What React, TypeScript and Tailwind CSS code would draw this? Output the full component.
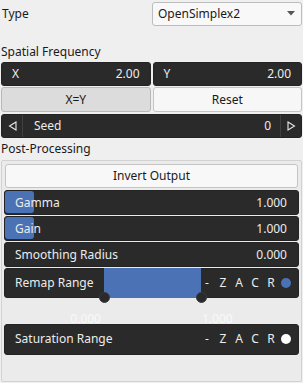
import React from "react";

const Dark = ({ children, className = "" }: { children?: React.ReactNode; className?: string }) => (
  <div className={`bg-[#2a2a2a] rounded-[3px] border border-[#232323] text-[#ececec] ${className}`}>{children}</div>
);

const Letters = ({ dot }: { dot: string }) => (
  <div className="absolute right-[7px] top-[5px] flex items-center text-[#ececec]">
    <span className="w-[16px] text-center">-</span>
    <span className="w-[16px] text-center">Z</span>
    <span className="w-[16px] text-center">A</span>
    <span className="w-[16px] text-center">C</span>
    <span className="w-[16px] text-center">R</span>
    <span className={`ml-[2px] w-[10px] h-[10px] rounded-full ${dot}`} />
  </div>
);

export default function App() {
  return (
    <div
      className="w-[303px] h-[383px] bg-[#efefef] text-[12px] text-[#1a1a1a] flex flex-col overflow-hidden"
      style={{ fontFamily: '"Noto Sans", "Open Sans", sans-serif' }}
    >
      {/* Type row */}
      <div className="h-[26px] flex items-center justify-between pt-[1px]">
        <span className="pl-[2px]">Type</span>
        <div className="w-[150px] h-[24px] mr-[1px] bg-[#f8f8f8] border border-[#bdbdbd] rounded-[3px] flex items-center justify-between pl-[5px] pr-[6px]">
          <span>OpenSimplex2</span>
          <svg width="8" height="5" viewBox="0 0 8 5"><path d="M0 0 H8 L4 4.5 Z" fill="#555" /></svg>
        </div>
      </div>

      <div className="h-[36px] flex items-end pb-[1px] pl-[1px]">Spatial Frequency</div>

      {/* X / Y */}
      <div className="grid grid-cols-2 gap-[2px] px-[1px] h-[24px]">
        <Dark className="flex items-center justify-between pl-[10px] pr-[10px]">
          <span>X</span><span>2.00</span>
        </Dark>
        <Dark className="flex items-center justify-between pl-[10px] pr-[10px]">
          <span>Y</span><span>2.00</span>
        </Dark>
      </div>

      {/* Buttons */}
      <div className="grid grid-cols-2 gap-[2px] px-[1px] h-[25px] mt-[1px]">
        <div className="bg-[#dcdcdc] border border-[#b8b8b8] rounded-[3px] flex items-center justify-center">X=Y</div>
        <div className="bg-[#f7f7f7] border border-[#c4c4c4] rounded-[3px] flex items-center justify-center">Reset</div>
      </div>

      {/* Seed */}
      <div className="px-[1px] mt-[2px] h-[24px]">
        <Dark className="h-full flex items-stretch">
          <div className="w-[21px] flex items-center justify-center border-r border-[#404040]">
            <svg width="9" height="10" viewBox="0 0 9 10"><path d="M8 1 L1.5 5 L8 9 Z" fill="none" stroke="#e6e6e6" strokeWidth="1.1" /></svg>
          </div>
          <div className="flex-1 flex items-center justify-between pl-[11px] pr-[9px]">
            <span>Seed</span><span>0</span>
          </div>
          <div className="w-[21px] flex items-center justify-center border-l border-[#404040]">
            <svg width="9" height="10" viewBox="0 0 9 10"><path d="M1 1 L7.5 5 L1 9 Z" fill="none" stroke="#e6e6e6" strokeWidth="1.1" /></svg>
          </div>
        </Dark>
      </div>

      <div className="h-[21px] flex items-end pl-[1px] pb-[1px]">Post-Processing</div>

      {/* Panel */}
      <div className="flex-1 mx-[1px] mb-[1px] mt-[1px] bg-[#ebebeb] border border-[#d2d2d2] rounded-[2px] flex flex-col px-[2px] pt-[3px]">
        <div className="mx-[1px] h-[24px] bg-[#f8f8f8] border border-[#c4c4c4] rounded-[3px] flex items-center justify-center">Invert Output</div>

        <Dark className="relative mt-[2px] h-[25px] flex items-center justify-between pl-[10px] pr-[11px]">
          <div className="absolute left-0 top-0 bottom-[1px] w-[29px] bg-[#4a72b5] rounded-[3px]" />
          <span className="relative">Gamma</span><span className="relative">1.000</span>
        </Dark>
        <Dark className="relative mt-[1px] h-[25px] flex items-center justify-between pl-[10px] pr-[11px]">
          <div className="absolute left-0 top-0 bottom-[1px] w-[29px] bg-[#4a72b5] rounded-[3px]" />
          <span className="relative">Gain</span><span className="relative">1.000</span>
        </Dark>
        <Dark className="mt-[1px] h-[25px] flex items-center justify-between pl-[10px] pr-[11px]">
          <span>Smoothing Radius</span><span>0.000</span>
        </Dark>

        {/* Remap Range */}
        <Dark className="relative mt-[1px] h-[30px] pl-[10px]">
          <div className="absolute left-[99px] top-[-1px] w-[97px] h-[30px] bg-[#4a72b5]" />
          <span className="absolute left-[10px] top-[5px]">Remap Range</span>
          <Letters dot="bg-[#4a72b5]" />
          <div className="absolute left-[94px] bottom-[-6px] w-[11px] h-[11px] rounded-full bg-[#2a2a2a] border border-[#3a3a3a]" />
          <div className="absolute left-[191px] bottom-[-6px] w-[11px] h-[11px] rounded-full bg-[#2a2a2a] border border-[#3a3a3a]" />
        </Dark>
        <div className="relative h-[26px]">
          <span className="absolute right-[198px] top-[12px] text-[#f9f9f9]">0.000</span>
          <span className="absolute left-[198px] top-[12px] text-[#f9f9f9]">1.000</span>
        </div>

        {/* Saturation Range */}
        <Dark className="relative h-[31px]">
          <span className="absolute left-[10px] top-[5px]">Saturation Range</span>
          <Letters dot="bg-white" />
        </Dark>
      </div>
    </div>
  );
}
